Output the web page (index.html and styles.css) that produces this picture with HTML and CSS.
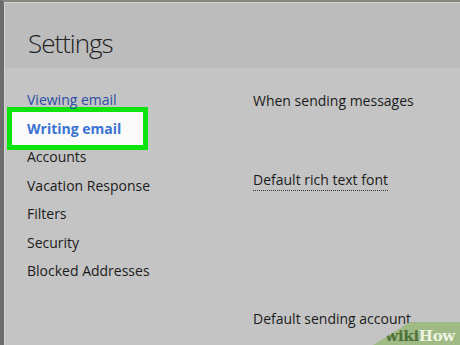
FILE: index.html
```html
<!DOCTYPE html>
<html>
<head>
<meta charset="utf-8">
<link rel="stylesheet" href="styles.css">
</head>
<body>
<div class="frame">
  <header class="header">
    <h1 class="title">Settings</h1>
  </header>
  <main class="content">
    <nav class="nav">
      <div class="nav-item link">Viewing email</div>
      <div class="nav-item active">Writing email</div>
      <div class="nav-item">Accounts</div>
      <div class="nav-item">Vacation Response</div>
      <div class="nav-item">Filters</div>
      <div class="nav-item">Security</div>
      <div class="nav-item">Blocked Addresses</div>
    </nav>
    <section class="pane">
      <div class="row r1">When sending messages</div>
      <div class="row r2"><span class="dotted">Default rich text font</span></div>
      <div class="row r3">Default sending account</div>
    </section>
  </main>
  <div class="wm"><span class="wm-text"><span class="wiki">wiki</span><span class="how">How</span></span></div>
</div>
</body>
</html>
```
FILE: styles.css
```css
html, body {
  margin: 0;
  padding: 0;
  width: 460px;
  height: 345px;
  overflow: hidden;
  background: #c4c4c4;
  font-family: "Open Sans", "Noto Sans", sans-serif;
}
.frame {
  position: relative;
  width: 460px;
  height: 345px;
  box-sizing: border-box;
  border-left: 4px solid #6c6c6c;
  border-top: 2px solid #85857e;
  display: flex;
  flex-direction: column;
}
.header {
  height: 66px;
  background: #bcbcbc;
  box-shadow: inset 1px 1px 0 #d2d2d2;
  box-sizing: border-box;
  padding: 24px 0 0 24px;
}
.title {
  margin: 0;
  font-size: 26px;
  letter-spacing: -1px;
  font-weight: 300;
  color: #222;
  line-height: 34px;
}
.content {
  flex: 1;
  display: flex;
  box-shadow: inset 1px 0 0 #d2d2d2;
  padding-top: 18px;
}
.nav {
  width: 249px;
  padding-left: 8px;
  box-sizing: border-box;
}
.nav-item {
  font-size: 14px;
  line-height: 28.5px;
  height: 28.5px;
  padding-left: 15px;
  color: #1b1b1b;
  box-sizing: border-box;
}
.nav-item.link {
  color: #2c4ea4;
}
.nav-item.active {
  width: 131px;
  height: 33px;
  line-height: 33px;
  margin: -2.25px 0;
  background: #fafafa;
  box-shadow: 0 0 0 5px #0ce40c;
  color: #3a72d2;
  font-weight: 700;
}
.pane {
  flex: 1;
  font-size: 14px;
  color: #1b1b1b;
}
.row {
  line-height: 20px;
}
.r1 { margin-top: 5px; }
.r2 { margin-top: 59px; }
.r3 { margin-top: 122px; line-height: 14px; }
.dotted {
  border-bottom: 1px dotted #333;
  padding-bottom: 1px;
}
.wm {
  position: absolute;
  right: 0;
  bottom: 0;
  width: 87px;
  height: 23px;
  background: #9fba85;
  clip-path: polygon(37px 0, 100% 0, 100% 100%, 0 100%);
  font-family: "DejaVu Serif", "Liberation Serif", serif;
  font-weight: 700;
  font-size: 15px;
  text-align: right;
  padding: 5px 5px 0 0;
  box-sizing: border-box;
}
.wm-text {
  display: inline-block;
  line-height: 14px;
  letter-spacing: -0.3px;
}
.wiki { color: #4e7039; }
.how { color: #eef4e2; }
```
